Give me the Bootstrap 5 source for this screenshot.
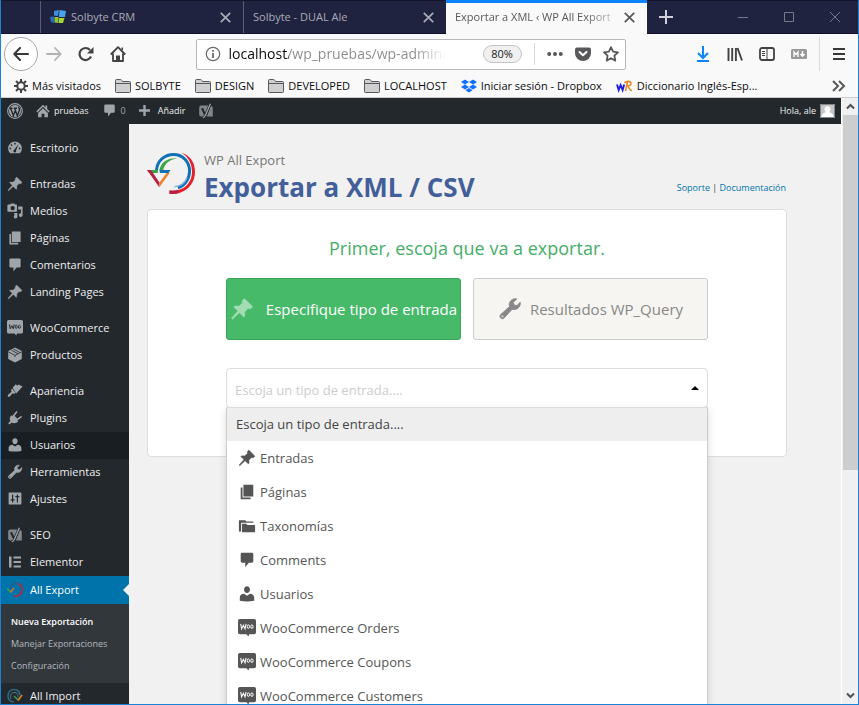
<!DOCTYPE html>
<html lang="es">
<head>
<meta charset="utf-8">
<meta name="viewport" content="width=device-width, initial-scale=1">
<title>Exportar a XML ‹ WP All Export</title>
<link rel="stylesheet" href="https://cdn.jsdelivr.net/npm/bootstrap@5.3.0/dist/css/bootstrap.min.css">
<style>
  body { font-family: "Open Sans", "Noto Sans", sans-serif; font-size: 11px; line-height: 16px; color: #444; }
  button { font: inherit; }
  svg { flex: none; display: block; }
  .window { height: 100vh; border: 1px solid #1883d7; border-top: 0; background: #f0f0f0; }
  .plain { background: none; border: 0; padding: 0; color: inherit; }

  /* tab strip */
  .tabstrip { height: 34px; background: #202340; border-top: 1px solid #14152b; border-bottom: 1px solid #110f2c; color: #a9aab6; font-size: 11px; }
  .lead-space { width: 39px; }
  .tab { flex: 0 1 203px; border-left: 1px solid #5c5d72; padding: 0 12px 0 9px; min-width: 0; }
  .tab-active { margin: -1px 0; border-left: 0; border-top: 3px solid #0a84ff; background: #f9f9fa; color: #58585c; padding-bottom: 3px; flex-basis: 201px; }
  .tab-active .tab-name { -webkit-mask-image: linear-gradient(90deg, #000 80%, rgba(0,0,0,.2)); mask-image: linear-gradient(90deg, #000 80%, rgba(0,0,0,.2)); }
  .winbtn { width: 46px; }

  /* toolbar */
  .toolbar { height: 40px; background: #f9f9fa; color: #424244; padding-left: 3px; }
  .back { width: 34px; height: 34px; background: #fff; border: 1px solid #a8a8ab; }
  .navbtn { width: 32px; }
  .urlbar { flex: 0 1 430px; height: 31px; background: #fff; border: 1px solid #b8b8ba; border-radius: 2px; padding: 0 6px 0 8px; gap: 12px; color: #606062; }
  .urlfield { gap: 8px; }
  .urlbar input { border: 0; outline: 0; padding: 0; min-width: 0; width: 215px; font-size: 14px;
    background: linear-gradient(90deg, #0c0c0d 59px, #8a8a8d 60px, #8a8a8d 185px, transparent 217px); -webkit-background-clip: text; background-clip: text; color: transparent; }
  .zoompill { width: 39px; height: 18px; background: #f0f0f1; border: 1px solid #c5c5c7; color: #222; }
  .urlsep { width: 1px; height: 22px; background: #d6d6d8; }
  .tool-right { border-left: 1px solid #dcdcde; height: 34px; width: 39px; }
  .bookmarks { height: 24px; background: #f9f9fa; border-bottom: 1px solid #ccc; color: #0c0c0d; padding-left: 13px; gap: 14px; }
  .bookmarks a { color: inherit; }

  /* admin */
  .adminbar { height: 26px; background: #23282d; font-size: 9px; padding: 0 6px; gap: 13px; }
  .adminbar a { color: #eee; }
  .adminbar .ico, .adminbar a .ico { color: #a0a5aa; }
  .sidebar { width: 128px; background: #23282d; padding-top: 11px; }
  .side-link { height: 27px; padding-left: 6px; gap: 7px; color: #eee; }
  .side-link svg { color: #a0a5aa; }
  .side-link.hovered { background: #191e23; }
  .side-link.current { height: 28px; background: #0073aa; color: #fff; position: relative; }
  .side-link.current::after { content: ""; position: absolute; right: 0; border: 6px solid transparent; border-right-color: #f1f1f1; border-left: 0; }
  .gap-top { margin-top: 9px; }
  .submenu { background: #32373c; font-size: 9px; padding: 7px 10px 6px; }
  .submenu a { display: block; line-height: 22px; color: #b4b9be; }
  .submenu a.chosen { color: #fff; font-weight: 600; }

  .content { background: #f1f1f1; padding: 27px 54px 0 18px; }
  .brand { margin-top: 1px; }
  .product { font-size: 13px; line-height: 18px; color: #777; }
  .page-title { font-size: 26px; line-height: 36px; font-weight: 700; color: #425f9a; }
  .helplinks { font-size: 9px; margin-top: 29px; padding-right: 1px; }
  .helplinks a { color: #0073aa; }
  .panel { background: #fff; border: 1px solid #ddd; border-radius: 4px; height: 248px; margin-top: 4px; padding-top: 26px; }
  .panel-inner { width: 100%; max-width: 482px; }
  .prompt { font-size: 18px; line-height: 24px; color: #46ad68; margin-bottom: 18px; }
  .choice { height: 62px; border-radius: 3px; font-size: 15px; flex: 1 1 0; }
  .choice-on { background: #46ba69; border: 1px solid #3ba55b; color: #fff; gap: 12px; }
  .choice-off { background: #f6f5f1; border: 1px solid #ccc; color: #888; gap: 8px; }
  .type-box { margin-top: 28px; }
  .type-select { height: 40px; border: 1px solid #ddd; border-radius: 4px; background: #fff; appearance: none; color: #ccc; font-size: 13px; padding: 4px 8px 0; }
  .caret-up { right: 9px; top: 18px; border: 4px solid transparent; border-bottom-color: #000; border-top: 0; }
  .options { top: 39px; left: 0; right: 0; height: 500px; background: #fff; border: 1px solid #ccc; border-top-color: #ddd; box-shadow: 0 3px 8px rgba(0,0,0,.15); z-index: 2; font-size: 13px; color: #555; }
  .options button { height: 34px; padding-left: 11px; gap: 4px; }
  .options button.picked { height: 33px; background: #eee; padding-left: 9px; color: #444; }
  .options .woo-light { --hole: #fff; }

  .scroll { width: 17px; background: #f0f0f0; border-left: 1px solid #fff; color: #505050; }
  .thumb { height: 355px; background: #cdcdcd; width: 15px; }
</style>
</head>
<body>
<svg width="0" height="0" class="position-absolute" aria-hidden="true">
  <symbol id="pin" viewBox="0 0 20 20"><path fill="currentColor" stroke="currentColor" stroke-width=".5" d="M10.400 3l1-1.200c.3-.4.8-.4 1.200 0l5.700 5.700c.4.400.400.900 0 1.200l-1 .9c-.8.2-1.600.1-2.200-.200l-3 3.200c.5 1.500.3 3-.5 4.200L7.800 13 2 18.500 1.200 17.800 6.600 11.700 3 8.200c1.300-.8 2.900-.9 4.300-.4l3.200-2.900c-.3-.6-.3-1.300-.1-1.900z"/></symbol>
  <symbol id="pages" viewBox="0 0 20 20"><path fill="currentColor" d="M6 2h11v13H6zM3 5h2v11h9v2H3z"/></symbol>
  <symbol id="folderd" viewBox="0 0 20 20"><path fill="currentColor" d="M1 16V3.500h7L9.500 5H17v1.500H3.500V16zM4.500 17V7.500H9l1.500 1.500H19V17z"/></symbol>
  <symbol id="comment" viewBox="0 0 20 20"><path fill="currentColor" d="M4.500 2h11q1.500 0 1.500 1.500v8q0 1.500-1.500 1.500H12l-4 5v-5H4.500Q3 13 3 11.500v-8Q3 2 4.500 2z"/></symbol>
  <symbol id="user" viewBox="0 0 20 20"><path fill="currentColor" d="M10 1.500c2 0 3.300 1.500 3.300 3.500S12 9 10 9 6.700 7 6.700 5 8 1.500 10 1.500zM2 17.500v-3.700C2 11.500 4 10 6.700 9.800L10 12l3.300-2.200C16 10 18 11.500 18 13.800v3.700q-8 1.500-16 0z"/></symbol>
  <symbol id="wrench" viewBox="0 0 20 20"><path fill="currentColor" stroke="currentColor" stroke-width=".8" fill-rule="evenodd" d="M17 9c-1.400 1.400-3.400 1.800-5.200 1.200L5 17.500c-.8.800-2 .8-2.800 0s-.8-2 0-2.800L9.600 8C9 6.200 9.500 4.300 10.900 2.900 12.200 1.600 14 1.200 15.600 1.600L12.700 4.500l.7 2.100 2.200.7 2.900-2.900C18.700 6 18.300 7.700 17 9zM3.600 15.200a1 1 0 1 0 .1 0z"/></symbol>
  <symbol id="woo" viewBox="0 0 20 20"><path fill="currentColor" d="M2 0h16q2 0 2 2v13q0 2-2 2h-5.500l-1 2.500-2-2.500H2q-2 0-2-2V2q0-2 2-2z"/><path fill="none" stroke="var(--hole,#23282d)" stroke-width="1.200" d="M3 5.500l1 5.500 2-4L7.800 11l1.200-5.500"/><ellipse cx="11.500" cy="8.500" rx="1.300" ry="2" fill="none" stroke="var(--hole,#23282d)" stroke-width="1.100"/><ellipse cx="15.500" cy="8.500" rx="1.300" ry="2" fill="none" stroke="var(--hole,#23282d)" stroke-width="1.100"/></symbol>
  <symbol id="yoast" viewBox="0 0 20 20"><path fill="currentColor" opacity=".75" d="M4 3h9.500L8.500 17H4q-2.500 0-2.500-2.500v-9Q1.500 3 4 3zM16 3.500q2.500.5 2.500 3V17h-7.500z"/><path fill="none" stroke="#23282d" stroke-width="2.600" d="M5 6.500l3.500 7.500"/><path fill="none" stroke="#23282d" stroke-width="3.400" d="M15.500 1L9.500 15q-1.200 3-3.500 3.500"/><path fill="none" stroke="currentColor" stroke-width="1.600" d="M15.500 1L9.500 15q-1.200 3-3.500 3.500"/></symbol>
  <symbol id="folder" viewBox="0 0 16 14"><path fill="#cfcfd1" stroke="#58585a" d="M.5 12.500V1.500q0-1 1-1h4q.800 0 1.200.800l.800 1.200h7q1 0 1 1v9q0 1-1 1h-13q-1 0-1-1z"/><path stroke="#58585a" d="M1 4.500h14"/></symbol>
  <symbol id="x" viewBox="0 0 10 10"><path stroke="currentColor" stroke-width="1.600" d="M.7.7l8.600 8.600M9.300.7L.7 9.300"/></symbol>
  <symbol id="export" viewBox="0 0 50 44">
    <path fill="none" stroke="#0d71b5" stroke-width="3" d="M9.500 19C10.500 8 19 2.500 27 2.500c10 0 16.500 8 16.500 17 0 8-5 15-12 17"/>
    <path fill="none" stroke="#7db4dd" stroke-width="1.500" d="M41 26c-2 5-6 9-13 9.500"/>
    <path fill="#e4202c" d="M35 .5C45 4 49.500 12 49 21.500 48.500 34 38 44 23 43v-3.500C37 41 45.500 32 46 21.500 46.300 13 43 5.500 35 .5z"/>
    <path fill="#b41f45" d="M23 43v-3.500q5 .5 9-1v3.500q-4 1.300-9 1z"/>
    <path fill="#3fa544" d="M12.500 19C14 11 20 6 31 6.500 23 8 17.500 12 16.500 19zM0 18.500h11v3H2z"/>
    <path fill="#0d71b5" d="M13 18.500h11l-2 3h-9z"/>
    <path fill="#b41f45" d="M0 18.500h4l8.500 12.500V36z"/><path fill="#ef7f22" d="M20 21.500h3L12.500 36v-4.500z"/>
  </symbol>
</svg>

<div class="window d-flex flex-column overflow-hidden">
  <header>
    <div class="tabstrip d-flex" role="tablist">
      <div class="lead-space"></div>
      <div class="tab d-flex align-items-center gap-1" role="tab">
        <svg width="17" height="16" viewBox="0 0 17 16"><path fill="#3f8fe0" d="M4 2l5-1-1 6-4-.5z"/><path fill="#2b6cb8" d="M0 8l4-.5V14L1 13z"/><path fill="#8cc63f" d="M4.500 8l4 0v6l-4-.5z"/><path fill="#4aa3ee" d="M9.500 1l6.500 1-1 6H9z"/><path fill="#a8d62e" d="M9 9l5.500 0-1.500 5H9z"/></svg>
        <span class="tab-name flex-grow-1 text-nowrap overflow-hidden">Solbyte CRM</span>
        <button class="plain" aria-label="Cerrar pestaña"><svg width="11" height="11"><use href="#x"/></svg></button>
      </div>
      <div class="tab d-flex align-items-center gap-1" role="tab">
        <span class="tab-name flex-grow-1 text-nowrap overflow-hidden">Solbyte - DUAL Ale</span>
        <button class="plain" aria-label="Cerrar pestaña"><svg width="11" height="11"><use href="#x"/></svg></button>
      </div>
      <div class="tab tab-active d-flex align-items-center" role="tab" aria-selected="true">
        <span class="tab-name flex-grow-1 text-nowrap">Exportar a XML ‹ WP All Export</span>
        <button class="plain ps-2" aria-label="Cerrar pestaña"><svg width="11" height="11"><use href="#x"/></svg></button>
      </div>
      <button class="plain px-2 ms-1" aria-label="Nueva pestaña"><svg width="14" height="14" viewBox="0 0 14 14"><path stroke="#d0d0d8" stroke-width="2" d="M7 0v14M0 7h14"/></svg></button>
      <div class="d-flex ms-auto">
        <button class="plain winbtn d-flex align-items-center justify-content-center" aria-label="Minimizar"><svg width="10" height="10"><path stroke="#777889" d="M0 5.500h10"/></svg></button>
        <button class="plain winbtn d-flex align-items-center justify-content-center" aria-label="Maximizar"><svg width="10" height="10"><path fill="none" stroke="#777889" d="M.5.5h9v9h-9z"/></svg></button>
        <button class="plain winbtn d-flex align-items-center justify-content-center" aria-label="Cerrar"><svg width="10" height="10"><path stroke="#777889" d="M0 0l10 10M10 0L0 10"/></svg></button>
      </div>
    </div>

    <div class="toolbar d-flex align-items-center">
      <button class="back rounded-circle p-0 d-flex align-items-center justify-content-center" aria-label="Atrás"><svg width="16" height="14" viewBox="0 0 16 14"><path fill="none" stroke="#38383a" stroke-width="2" stroke-linecap="round" stroke-linejoin="round" d="M15 7H1.500M7 1L1.300 7 7 13"/></svg></button>
      <button class="plain navbtn d-flex justify-content-center" aria-label="Adelante"><svg width="16" height="14" viewBox="0 0 16 14"><path fill="none" stroke="#b1b1b3" stroke-width="1.800" stroke-linecap="round" stroke-linejoin="round" d="M1 7h13.500M9 1l5.700 6L9 13"/></svg></button>
      <button class="plain navbtn d-flex justify-content-center" aria-label="Recargar"><svg width="16" height="16" viewBox="0 0 16 16"><path fill="none" stroke="#424244" stroke-width="2.200" d="M13 10.500A6 6 0 1 1 12 4"/><path fill="#424244" d="M15.500 1v6.500H9z"/></svg></button>
      <button class="plain navbtn d-flex justify-content-center" aria-label="Inicio"><svg width="16" height="16" viewBox="0 0 16 16"><path fill="none" stroke="#424244" stroke-width="1.800" stroke-linejoin="round" d="M.8 8.500L8 1.200l7.200 7.300M3 7.500V15h10V7.500"/><path fill="#424244" d="M6 15V9.500h4V15zM11.500 1.500h1.500v3l-1.500-1z"/></svg></button>
      <div class="flex-grow-1"></div>
      <form class="urlbar d-flex align-items-center">
        <div class="urlfield d-flex align-items-center me-auto">
          <svg width="16" height="16" viewBox="0 0 16 16"><circle cx="8" cy="8" r="6.700" fill="none" stroke="#6a6a6c" stroke-width="1.200"/><path stroke="#6a6a6c" stroke-width="1.800" d="M8 7v5M8 4v1.700"/></svg>
          <input type="text" aria-label="Dirección" value="localhost/wp_pruebas/wp-admin/ad">
        </div>
        <span class="zoompill rounded-pill d-flex align-items-center justify-content-center">80%</span>
        <span class="urlsep"></span>
        <svg width="16" height="16" viewBox="0 0 16 16"><g fill="#58585a"><circle cx="2.200" cy="8" r="2"/><circle cx="8" cy="8" r="2"/><circle cx="13.800" cy="8" r="2"/></g></svg>
        <svg width="16" height="16" viewBox="0 0 16 16"><path fill="#58585a" d="M2 1.500h12q2 0 2 2V7a8 8 0 0 1-16 0V3.500q0-2 2-2z"/><path fill="none" stroke="#fff" stroke-width="2" stroke-linecap="round" stroke-linejoin="round" d="M4.500 6L8 9.300 11.500 6"/></svg>
        <svg width="16" height="16" viewBox="0 0 16 16"><path fill="none" stroke="#58585a" stroke-width="1.800" stroke-linejoin="round" d="M8 1.200l2.100 4.500 4.900.6-3.600 3.400.9 4.900L8 12.200l-4.300 2.400.9-4.900L1 6.300l4.900-.6z"/></svg>
      </form>
      <div class="flex-grow-1"></div>
      <button class="plain navbtn d-flex justify-content-center" aria-label="Descargas"><svg width="14" height="16" viewBox="0 0 14 16"><path fill="none" stroke="#0a84ff" stroke-width="2" d="M7 0v12M2 7l5 5 5-5M1 15h12"/></svg></button>
      <button class="plain navbtn d-flex justify-content-center" aria-label="Biblioteca"><svg width="16" height="14" viewBox="0 0 16 14"><path stroke="#424244" stroke-width="1.900" d="M1.500 1v13M5.200 1v13M8.900 1v13M10.500 1L15 13.500"/></svg></button>
      <button class="plain navbtn d-flex justify-content-center" aria-label="Barra lateral"><svg width="16" height="14" viewBox="0 0 16 14"><rect x="1" y="1" width="14" height="12" rx="2" fill="none" stroke="#424244" stroke-width="1.800"/><path stroke="#424244" d="M8 1v12M3 4.500h3M3 6.500h3M3 8.500h3"/></svg></button>
      <button class="plain navbtn d-flex justify-content-center" aria-label="Markdown"><svg width="16" height="10" viewBox="0 0 16 10"><rect width="16" height="10" rx="1.500" fill="#98989b"/><path fill="none" stroke="#fff" stroke-width="1.400" d="M3 8V3l2 2.500L7 3v5M11.500 2v5M9.500 5l2 2.300 2-2.300"/></svg></button>
      <div class="tool-right d-flex align-items-center justify-content-center ms-1"><button class="plain" aria-label="Menú"><svg width="12" height="12" viewBox="0 0 12 12"><path stroke="#38383a" stroke-width="1.800" d="M0 1h12M0 6h12M0 11h12"/></svg></button></div>
    </div>

    <nav class="bookmarks d-flex align-items-center text-nowrap" aria-label="Marcadores">
      <a href="#" class="d-flex align-items-center text-decoration-none gap-1"><svg width="14" height="14" viewBox="0 0 14 14"><circle cx="7" cy="7" r="3.700" fill="none" stroke="#424244" stroke-width="2"/><path stroke="#424244" stroke-width="2" d="M7 0v3M7 11v3M0 7h3M11 7h3M2 2l2 2M10 10l2 2M12 2l-2 2M4 10l-2 2"/></svg>Más visitados</a>
      <a href="#" class="d-flex align-items-center gap-1 text-decoration-none"><svg width="16" height="14"><use href="#folder"/></svg>SOLBYTE</a>
      <a href="#" class="d-flex align-items-center gap-1 text-decoration-none"><svg width="16" height="14"><use href="#folder"/></svg>DESIGN</a>
      <a href="#" class="d-flex align-items-center gap-1 text-decoration-none"><svg width="16" height="14"><use href="#folder"/></svg>DEVELOPED</a>
      <a href="#" class="d-flex align-items-center gap-1 text-decoration-none"><svg width="16" height="14"><use href="#folder"/></svg>LOCALHOST</a>
      <a href="#" class="d-flex align-items-center gap-1 text-decoration-none"><svg width="16" height="14" viewBox="0 0 16 14"><path fill="#0f6fff" d="M4 .5l4 2.500-4 2.500L0 3zM12 .5L16 3l-4 2.500L8 3zM4 5.500L8 8l-4 2.500L0 8zM12 5.500L16 8l-4 2.500L8 8zM8 9l3.500 2.300L8 13.500l-3.500-2.200z"/></svg>Iniciar sesión - Dropbox</a>
      <a href="#" class="d-flex align-items-center gap-1 text-decoration-none"><svg width="17" height="14" viewBox="0 0 17 14"><path fill="none" stroke="#1d1de0" stroke-width="1.900" d="M1 5.500L2.700 11 4.600 6l2 5L8.200 5.500"/><path fill="none" stroke="#e8892b" stroke-width="1.600" d="M9.500 12L11.500 3M8.500 4c2-2.500 7-2 6.500.5C14.700 6.500 12 7 11 7c2 0 2 4.500 5 4.500"/></svg>Diccionario Inglés-Esp...</a>
      <button class="plain ms-auto me-2 pe-1" aria-label="Más marcadores"><svg width="14" height="12" viewBox="0 0 14 12"><path fill="none" stroke="#58585a" stroke-width="2" d="M1 1l5 5-5 5M7 1l5 5-5 5"/></svg></button>
    </nav>
  </header>

  <div class="d-flex flex-grow-1 overflow-hidden">
    <div class="d-flex flex-column flex-grow-1">
      <div class="adminbar d-flex align-items-center">
        <svg class="ico" width="16" height="16" viewBox="0 0 20 20"><circle cx="10" cy="10" r="9.200" fill="none" stroke="currentColor" stroke-width="1.400"/><circle cx="10" cy="10" r="7.600" fill="currentColor"/><path fill="none" stroke="#23282d" stroke-width="1.700" d="M3.500 6.500h3.500M4.500 6.500L8 16l2.200-6M8.500 6.500h4M9.500 6.500L13 16l2.500-7q.5-2-1.200-4"/></svg>
        <a href="#" class="d-flex align-items-center gap-1 text-decoration-none"><svg class="ico" width="14" height="14" viewBox="0 0 20 20"><path fill="currentColor" d="M10 1l3.500 3.500V2H16v5l3.500 3.500L18 12l-8-8-8 8L.5 10.500zM10 6l7 7v6h-5v-5H8v5H3v-6z"/></svg>pruebas</a>
        <a href="#" class="d-flex align-items-center gap-1 text-decoration-none"><svg class="ico" width="15" height="15"><use href="#comment"/></svg><span class="ico">0</span></a>
        <a href="#" class="d-flex align-items-center gap-2 text-decoration-none"><svg class="ico" width="11" height="11" viewBox="0 0 11 11"><path stroke="currentColor" stroke-width="2.400" d="M5.500 0v11M0 5.500h11"/></svg>Añadir</a>
        <svg class="ico" width="16" height="16"><use href="#yoast"/></svg>
        <a href="#" class="d-flex align-items-center gap-1 text-decoration-none ms-auto">Hola, ale<svg width="15" height="14" viewBox="0 0 15 14"><path fill="#c5c5c5" d="M0 0h15v14H0z"/><circle cx="7.500" cy="5.300" r="3" fill="#fff"/><path fill="#fff" d="M1.500 13c0-3.500 3-5 6-5s6 1.500 6 5z"/><path fill="none" stroke="#82878c" d="M.5.5h14v13H.5z"/></svg></a>
      </div>

      <div class="d-flex flex-grow-1 overflow-hidden">
        <nav class="sidebar flex-shrink-0" aria-label="Administración">
          <a href="#" class="side-link d-flex align-items-center text-decoration-none"><svg width="16" height="16" viewBox="0 0 20 20"><path fill="currentColor" d="M3.800 16.500A8.600 8.600 0 1 1 16.200 16.500z"/><g fill="#23282d"><circle cx="10" cy="4.600" r="1.100"/><circle cx="5.700" cy="6.400" r="1.100"/><circle cx="4.200" cy="10.500" r="1.100"/><circle cx="15.800" cy="10.500" r="1.100"/><path d="M14.500 5L11.300 13a1.800 1.800 0 1 1-2.200-.9z"/></g></svg>Escritorio</a>
          <a href="#" class="side-link gap-top d-flex align-items-center text-decoration-none"><svg width="16" height="16"><use href="#pin"/></svg>Entradas</a>
          <a href="#" class="side-link d-flex align-items-center text-decoration-none"><svg width="16" height="16" viewBox="0 0 20 20"><path fill="currentColor" fill-rule="evenodd" d="M1.500 2H4l1-1.500h4L10 2h1.500q1 0 1 1v7q0 1-1 1h-10q-1 0-1-1V3q0-1 1-1zM7 3.700a2.700 2.700 0 1 0 .1 0z"/><path fill="currentColor" d="M14 4.500h5.500V15a2.300 2.300 0 1 1-2-2.200V8H14zM9 12.500h4V17a2.300 2.300 0 1 1-2-2.200h-2z"/></svg>Medios</a>
          <a href="#" class="side-link d-flex align-items-center text-decoration-none"><svg width="16" height="16"><use href="#pages"/></svg>Páginas</a>
          <a href="#" class="side-link d-flex align-items-center text-decoration-none"><svg width="16" height="16"><use href="#comment"/></svg>Comentarios</a>
          <a href="#" class="side-link d-flex align-items-center text-decoration-none"><svg width="16" height="16"><use href="#pin"/></svg>Landing Pages</a>
          <a href="#" class="side-link gap-top d-flex align-items-center text-decoration-none"><svg width="16" height="16"><use href="#woo"/></svg>WooCommerce</a>
          <a href="#" class="side-link d-flex align-items-center text-decoration-none"><svg width="16" height="16" viewBox="0 0 20 20"><path fill="currentColor" d="M10 .5l8.500 4.500v10L10 19.500 1.500 15V5z"/><path fill="none" stroke="#23282d" d="M1.500 6L10 10.500 18.500 6M10 10.500v2M5.500 4l8.500 4.500M8 2.500l8 4.300"/></svg>Productos</a>
          <a href="#" class="side-link gap-top d-flex align-items-center text-decoration-none"><svg width="16" height="16" viewBox="0 0 20 20"><path fill="currentColor" d="M7 6l4-4.500 2 1.800L14.500 2l5 2.500-8 8.500zM6.300 7l4.500 5.500-1.800 1-2-.8L3.500 17q-1.200 1-2.200 0t0-2.200L5.800 11 5 9z"/></svg>Apariencia</a>
          <a href="#" class="side-link d-flex align-items-center text-decoration-none"><svg width="16" height="16" viewBox="0 0 20 20"><path fill="currentColor" d="M5.500 6.500l8.500 8c-2.500 2.500-6 2.500-8 1L3 18l-1.500-1.500 2.700-2.600C3 11.500 3 9 5.500 6.500z"/><path stroke="currentColor" stroke-width="2" stroke-linecap="round" d="M8.500 7l3.500-4.500M13 12l4.500-3.500"/><path fill="currentColor" d="M8 6l6 6-2 2-6-6z"/></svg>Plugins</a>
          <a href="#" class="side-link hovered d-flex align-items-center text-decoration-none"><svg width="16" height="16"><use href="#user"/></svg>Usuarios</a>
          <a href="#" class="side-link d-flex align-items-center text-decoration-none"><svg width="16" height="16"><use href="#wrench"/></svg>Herramientas</a>
          <a href="#" class="side-link d-flex align-items-center text-decoration-none"><svg width="16" height="16" viewBox="0 0 20 20"><path fill="currentColor" d="M3 2h14q1 0 1 1v13q0 1-1 1H3q-1 0-1-1V3q0-1 1-1z"/><path fill="none" stroke="#23282d" stroke-width="1.500" d="M7 4.500v10M4.500 11h5M13 4.500v10M10.500 7h5"/></svg>Ajustes</a>
          <a href="#" class="side-link gap-top d-flex align-items-center text-decoration-none"><svg width="16" height="16"><use href="#yoast"/></svg>SEO</a>
          <a href="#" class="side-link d-flex align-items-center text-decoration-none"><svg width="16" height="16" viewBox="0 0 16 16"><path fill="currentColor" d="M2 2.500h2.500v11H2zM6.500 2.500H14v2H6.500zM6.500 7H14v2H6.500zM6.500 11.500H14v2H6.500z"/></svg>Elementor</a>
          <a href="#" class="side-link current d-flex align-items-center text-decoration-none"><svg width="16" height="16" viewBox="0 0 16 16"><path fill="none" stroke="#2d5a8b" stroke-width="1.300" d="M3 7C3 3 6 1.500 9 1.500"/><path fill="none" stroke="#b3283f" stroke-width="1.700" d="M10 1.500c4 .5 5.500 4 5 7-.6 4-4 6-8 5.700"/><path fill="none" stroke="#3aa04a" stroke-width="1.700" d="M.5 6.500l3 3.500"/><path fill="none" stroke="#d07030" stroke-width="1.700" d="M3.500 10.500L7 6"/></svg>All Export</a>
          <div class="submenu">
            <a href="#" class="chosen text-decoration-none">Nueva Exportación</a>
            <a href="#" class="text-decoration-none">Manejar Exportaciones</a>
            <a href="#" class="text-decoration-none">Configuración</a>
          </div>
          <a href="#" class="side-link d-flex align-items-center text-decoration-none"><svg width="16" height="16" viewBox="0 0 16 16"><path fill="none" stroke="#2b6a80" stroke-width="1.700" d="M13 7C12.500 3 10 1.500 7 1.500 3.500 1.500 1 4 1 8c0 3 2 6 6 6"/><path fill="none" stroke="#4c7f95" d="M4 11C2.500 7 5 4 8 4.500s3 3 3 5"/><path fill="none" stroke="#3d9a4a" stroke-width="1.600" d="M7 8l4 4"/><path fill="none" stroke="#d9872c" stroke-width="1.600" d="M11 12.500l4-5.500"/></svg>All Import</a>
        </nav>

        <main class="content flex-grow-1">
          <div class="d-flex align-items-start">
            <svg class="brand" width="49" height="43"><use href="#export"/></svg>
            <div class="ps-2 flex-grow-1">
              <div class="product">WP All Export</div>
              <h1 class="page-title m-0">Exportar a XML / CSV</h1>
            </div>
            <div class="helplinks text-nowrap"><a href="#" class="text-decoration-none">Soporte</a> | <a href="#" class="text-decoration-none">Documentación</a></div>
          </div>

          <section class="panel">
            <div class="panel-inner mx-auto">
              <h2 class="prompt text-center fw-normal">Primer, escoja que va a exportar.</h2>
              <div class="d-flex gap-2">
                <button class="choice choice-on d-flex align-items-center justify-content-center p-0 me-1"><svg width="24" height="24" class="opacity-50"><use href="#pin"/></svg><span class="text-nowrap">Especifique tipo de entrada</span></button>
                <button class="choice choice-off d-flex align-items-center justify-content-center p-0"><svg width="24" height="24"><use href="#wrench"/></svg><span class="text-nowrap">Resultados WP_Query</span></button>
              </div>
              <div class="type-box position-relative">
                <select class="type-select w-100" aria-label="Tipo de entrada"><option>Escoja un tipo de entrada....</option></select>
                <span class="caret-up position-absolute"></span>
                <div class="options position-absolute" role="listbox" aria-label="Tipos de entrada">
                  <button class="plain picked w-100 d-flex align-items-center" role="option" aria-selected="true">Escoja un tipo de entrada....</button>
                  <button class="plain w-100 d-flex align-items-center" role="option"><svg width="18" height="18"><use href="#pin"/></svg>Entradas</button>
                  <button class="plain w-100 d-flex align-items-center" role="option"><svg width="18" height="18"><use href="#pages"/></svg>Páginas</button>
                  <button class="plain w-100 d-flex align-items-center" role="option"><svg width="18" height="18"><use href="#folderd"/></svg>Taxonomías</button>
                  <button class="plain w-100 d-flex align-items-center" role="option"><svg width="18" height="18"><use href="#comment"/></svg>Comments</button>
                  <button class="plain w-100 d-flex align-items-center" role="option"><svg width="18" height="18"><use href="#user"/></svg>Usuarios</button>
                  <button class="plain w-100 d-flex align-items-center" role="option"><svg class="woo-light" width="18" height="18"><use href="#woo"/></svg>WooCommerce Orders</button>
                  <button class="plain w-100 d-flex align-items-center" role="option"><svg class="woo-light" width="18" height="18"><use href="#woo"/></svg>WooCommerce Coupons</button>
                  <button class="plain w-100 d-flex align-items-center" role="option"><svg class="woo-light" width="18" height="18"><use href="#woo"/></svg>WooCommerce Customers</button>
                </div>
              </div>
            </div>
          </section>
        </main>
      </div>
    </div>
    <div class="scroll flex-shrink-0 d-flex flex-column align-items-center" aria-hidden="true">
      <svg class="my-1" width="9" height="9" viewBox="0 0 9 9"><path fill="none" stroke="currentColor" stroke-width="2" d="M1 6.500L4.500 3 8 6.500"/></svg>
      <div class="thumb"></div>
      <svg class="mt-auto mb-1" width="9" height="9" viewBox="0 0 9 9"><path fill="none" stroke="currentColor" stroke-width="2" d="M1 2.500L4.500 6 8 2.500"/></svg>
    </div>
  </div>
</div>
<script src="https://cdn.jsdelivr.net/npm/bootstrap@5.3.0/dist/js/bootstrap.bundle.min.js"></script>
</body>
</html>
